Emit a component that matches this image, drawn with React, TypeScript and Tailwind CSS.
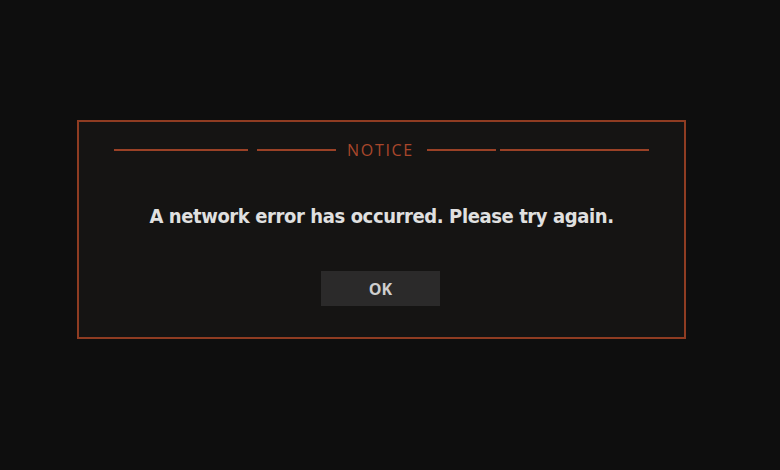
export default function App() {
  return (
    <div className="w-[780px] h-[470px] bg-[#0e0e0e] pl-[77px] pt-[120px]">
      {/* dialog */}
      <div className="w-[609px] h-[219px] bg-[#151413] border-2 border-[#8f3c22] flex flex-col items-center px-[35px] pt-[18px]">
        {/* title row */}
        <div className="w-full flex items-center">
          <div className="w-[134px] h-[2px] bg-[#9a4126]" />
          <div className="w-[9px]" />
          <div className="w-[79px] h-[2px] bg-[#9a4126]" />
          <div
            className="pl-[11px] pr-[13px] text-[16px] tracking-[1.7px] text-[#a9472b] leading-[20px]"
            style={{ fontFamily: '"Open Sans", "Liberation Sans", sans-serif' }}
          >
            NOTICE
          </div>
          <div className="w-[69px] h-[2px] bg-[#9a4126]" />
          <div className="w-[4px]" />
          <div className="flex-1 h-[2px] bg-[#9a4126]" />
        </div>

        <p
          className="mt-[43px] text-[20px] tracking-[-0.4px] font-bold text-[#e0e0e0] leading-[26px]"
          style={{ fontFamily: '"DejaVu Sans Condensed", "DejaVu Sans", sans-serif' }}
        >
          A network error has occurred. Please try again.
        </p>

        <button
          className="mt-[42px] w-[119px] h-[35px] bg-[#2b2a2a] text-[#cfcfcf] text-[16px] font-bold ml-[-2px]"
          style={{ fontFamily: '"Open Sans", "Liberation Sans", sans-serif' }}
        >
          OK
        </button>
      </div>
    </div>
  );
}
